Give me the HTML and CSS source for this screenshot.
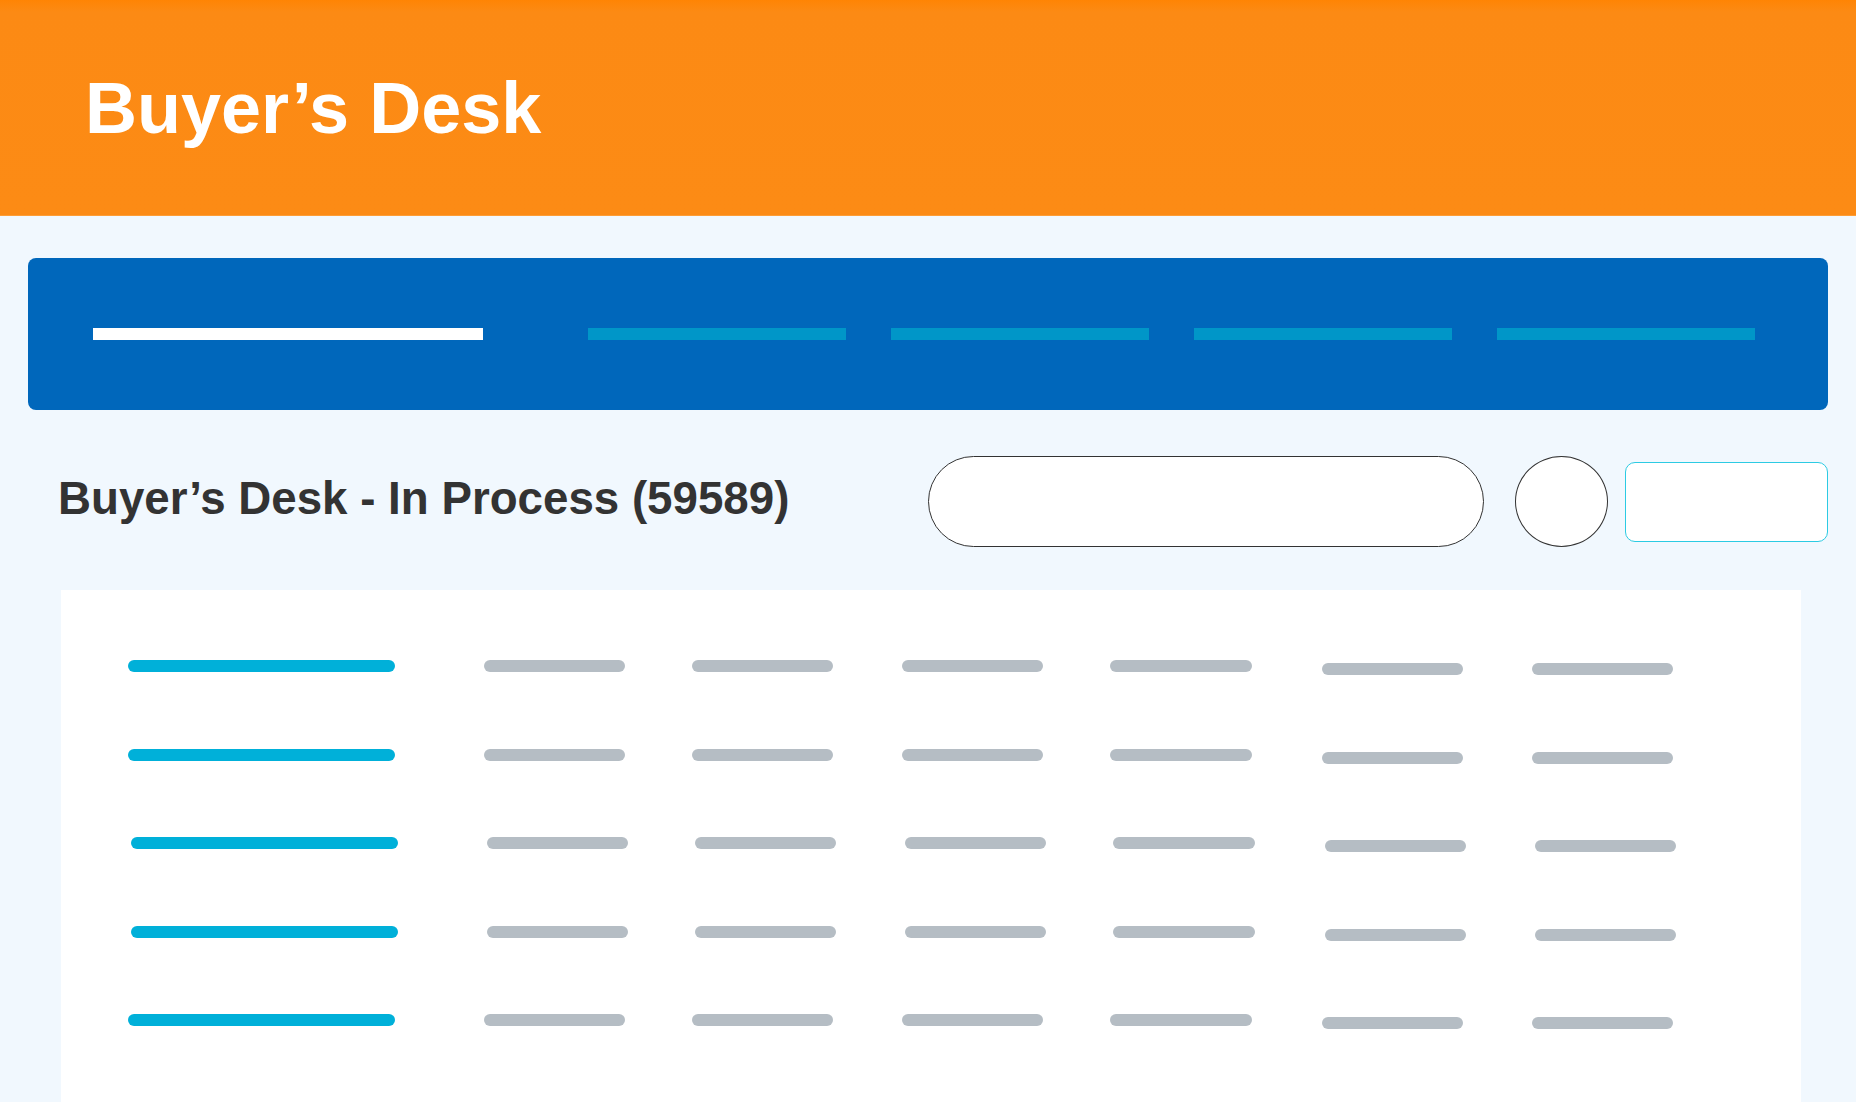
FILE: index.html
```html
<!DOCTYPE html>
<html lang="en">
<head>
    <meta charset="UTF-8">
    <meta name="viewport" content="width=device-width, initial-scale=1.0">
    <title>Buyer’s Desk</title>
    <link rel="stylesheet" href="styles.css">
</head>
<body>
    <header class="topbar">
        <h1>Buyer’s Desk</h1>
    </header>

    <main class="page">
        <nav class="tabs">
            <span class="tab active"></span>
            <span class="tab"></span>
            <span class="tab"></span>
            <span class="tab"></span>
            <span class="tab"></span>
        </nav>

        <div class="toolbar">
            <h2>Buyer’s Desk - In Process (59589)</h2>
            <input class="search" type="text">
            <button class="round-btn"></button>
            <button class="outline-btn"></button>
        </div>

        <section class="card">
            <div class="row">
                <span class="bar key"></span>
                <span class="bar"></span>
                <span class="bar"></span>
                <span class="bar"></span>
                <span class="bar wide"></span>
                <span class="bar low"></span>
                <span class="bar low"></span>
            </div>
            <div class="row">
                <span class="bar key"></span>
                <span class="bar"></span>
                <span class="bar"></span>
                <span class="bar"></span>
                <span class="bar wide"></span>
                <span class="bar low"></span>
                <span class="bar low"></span>
            </div>
            <div class="row shifted">
                <span class="bar key"></span>
                <span class="bar"></span>
                <span class="bar"></span>
                <span class="bar"></span>
                <span class="bar wide"></span>
                <span class="bar low"></span>
                <span class="bar low"></span>
            </div>
            <div class="row shifted">
                <span class="bar key"></span>
                <span class="bar"></span>
                <span class="bar"></span>
                <span class="bar"></span>
                <span class="bar wide"></span>
                <span class="bar low"></span>
                <span class="bar low"></span>
            </div>
            <div class="row">
                <span class="bar key"></span>
                <span class="bar"></span>
                <span class="bar"></span>
                <span class="bar"></span>
                <span class="bar wide"></span>
                <span class="bar low"></span>
                <span class="bar low"></span>
            </div>
        </section>
    </main>
</body>
</html>
```

FILE: styles.css
```css
body {
    margin: 0;
    font-family: "Liberation Sans", Arial, sans-serif;
    background-color: #f1f8fe;
    overflow: hidden;
}
.topbar {
    height: 215px;
    display: flex;
    align-items: center;
    padding-left: 85px;
    background: linear-gradient(to bottom, #ff8404 0, #fc8a14 12px, #fc8b15 100%);
    border-bottom: 1px solid #fd9d36;
}
.topbar h1 {
    margin: 0;
    font-size: 72px;
    line-height: 1;
    font-weight: bold;
    color: white;
}
.page {
    padding: 42px 28px 0;
}
.tabs {
    height: 152px;
    display: flex;
    align-items: center;
    padding-left: 65px;
    gap: 45px;
    background-color: #0067bb;
    border-radius: 8px;
}
.tab {
    width: 258px;
    height: 12px;
    background-color: #0096c8;
}
.tab.active {
    width: 390px;
    margin-right: 60px;
    background-color: white;
}
.toolbar {
    display: flex;
    align-items: center;
    margin-top: 46px;
    height: 91px;
}
.toolbar h2 {
    margin: 0 auto 0 30px;
    padding-bottom: 5px;
    font-size: 45.7px;
    font-weight: bold;
    color: #333333;
}
.search {
    width: 556px;
    height: 91px;
    box-sizing: border-box;
    border: 1px solid #333;
    border-radius: 46px;
    background: white;
    padding: 0 30px;
}
.round-btn {
    width: 93px;
    height: 91px;
    margin-left: 31px;
    border: 1px solid #333;
    border-radius: 50%;
    background: white;
    cursor: pointer;
}
.outline-btn {
    width: 203px;
    height: 80px;
    margin-left: 17px;
    border: 1px solid #2ccbe3;
    border-radius: 10px;
    background: white;
    cursor: pointer;
}
.card {
    margin: 43px 27px 0 33px;
    height: 512px;
    box-sizing: border-box;
    padding: 70px 0 0 67px;
    background: white;
    display: flex;
    flex-direction: column;
    gap: 76.5px;
}
.row {
    display: grid;
    grid-template-columns: 356px 208px 210px 208px 212px 210px 209px;
    align-items: start;
    height: 12px;
}
.row.shifted {
    padding-left: 3px;
}
.bar {
    width: 141px;
    height: 12px;
    border-radius: 6px;
    background-color: #b5bdc4;
}
.bar.wide {
    width: 142px;
}
.bar.key {
    width: 267px;
    background-color: #00b0d9;
}
.bar.low {
    margin-top: 3px;
}
```
